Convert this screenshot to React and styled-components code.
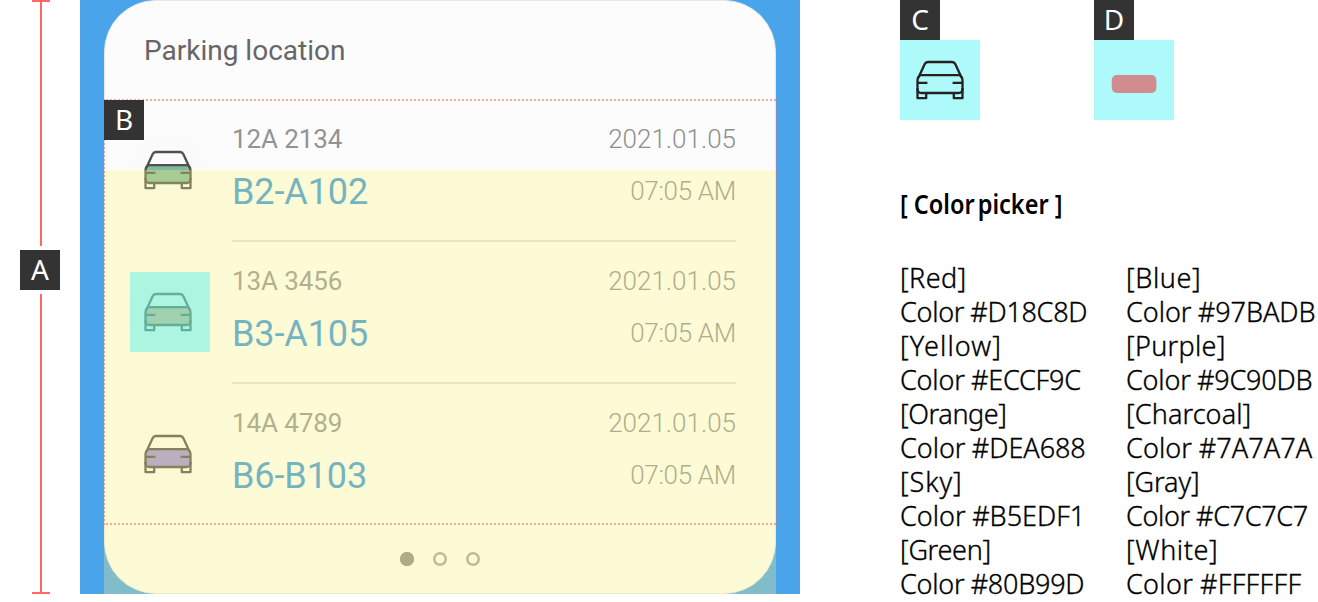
import React from "react";
import styled, { createGlobalStyle } from "styled-components";

const GlobalStyle = createGlobalStyle`
  * { box-sizing: border-box; }
  body { margin: 0; background: #fff; overflow: hidden; }
`;

const Page = styled.main`
  display: flex;
  width: 1318px;
  height: 602px;
  overflow: hidden;
  background: #fff;
`;

const Measure = styled.div`
  width: 80px;
  height: 594px;
  display: flex;
  flex-direction: column;
  align-items: center;
  gap: 4px;
  flex: none;
`;

const MeasureLine = styled.div`
  width: 18px;
  margin-left: 2px;
  height: ${(p) => p.$height}px;
  background: linear-gradient(#ff6666, #ff6666) center / 2px 100% no-repeat;
  border-${(p) => p.$cap}: 2px solid #ff6666;
`;

const Badge = styled.div`
  width: 40px;
  height: 40px;
  display: flex;
  align-items: center;
  justify-content: center;
  flex: none;
  background: #333;
  color: #fff;
  font: 400 28px/38px "Noto Sans", sans-serif;
  padding-bottom: 2px;
`;

const CornerBadge = styled(Badge)`
  position: absolute;
  left: 0;
  top: 1px;
`;

const Stage = styled.section`
  position: relative;
  width: 720px;
  height: 594px;
  padding: 0 24px;
  background: #4aa4ea;
  flex: none;
`;

const Card = styled.div`
  width: 672px;
  height: 594px;
  border: 1px solid #e6e8ea;
  border-radius: 52px;
  background: #fcfcfc;
  font-family: Roboto, sans-serif;
`;

const Title = styled.h1`
  margin: 0;
  height: 99px;
  padding: 1px 39px 0;
  font-size: 28px;
  font-weight: 400;
  line-height: 98px;
  color: #666;
`;

const List = styled.div`
  height: 425px;
  padding: 0 39px 0 23px;
`;

const Row = styled.div`
  display: flex;
  gap: 24px;
  height: 142px;
`;

const IconDisc = styled.div`
  width: 80px;
  height: 80px;
  margin-top: 30px;
  border-radius: 50%;
  background: #fbfbfb;
  flex: none;
`;

const RowBody = styled.div`
  flex: 1;
  display: flex;
  justify-content: space-between;
  border-bottom: 2px solid ${(p) => (p.$last ? "transparent" : "#dedede")};
`;

const Column = styled.div`
  display: flex;
  flex-direction: column;
  text-align: ${(p) => p.$align};
`;

const Plate = styled.span`
  padding-top: 23px;
  font-size: 26px;
  line-height: 32px;
  letter-spacing: -0.1px;
  color: #939393;
`;

const Spot = styled.span`
  padding-top: 16px;
  font-size: 36px;
  line-height: 42px;
  letter-spacing: -0.1px;
  color: #3899dd;
`;

const DateText = styled.span`
  padding-top: 23px;
  font-size: 26px;
  font-weight: 300;
  line-height: 32px;
  color: #8f8f8f;
`;

const TimeText = styled(DateText)`
  padding-top: 20px;
  letter-spacing: -0.3px;
`;

const Pager = styled.div`
  display: flex;
  justify-content: center;
  gap: 19px;
  padding: 27px 0 0;
`;

const Dot = styled.i`
  width: 14px;
  height: 14px;
  border-radius: 50%;
  box-shadow: inset 0 0 0 2.5px ${(p) => (p.$on ? "#8c8c8c" : "#a2a2a2")};
  background: ${(p) => (p.$on ? "#8c8c8c" : "transparent")};
`;

const YellowZone = styled.div`
  position: absolute;
  left: 24px;
  top: 170px;
  width: 672px;
  height: 424px;
  background: rgba(255, 245, 126, 0.3);
`;

const Outline = styled.div`
  position: absolute;
  left: 24px;
  top: 99px;
  width: 673px;
  height: 426px;
  --dot: rgba(255, 96, 96, 0.55);
  background:
    repeating-linear-gradient(90deg, transparent 0 2px, var(--dot) 2px 4px) 0 0 / 100% 2px no-repeat,
    repeating-linear-gradient(90deg, transparent 0 2px, var(--dot) 2px 4px) 0 100% / 100% 2px no-repeat,
    repeating-linear-gradient(var(--dot) 0 2px, transparent 2px 4px) 0 0 / 1px 100% no-repeat,
    repeating-linear-gradient(var(--dot) 0 2px, transparent 2px 4px) 100% 0 / 1px 100% no-repeat;
`;

const Highlight = styled.div`
  width: 80px;
  height: 80px;
  background: rgba(53, 239, 240, 0.4);
`;

const RowHighlight = styled(Highlight)`
  position: absolute;
  left: 50px;
  top: 272px;
`;

const Legend = styled.section`
  padding-left: 100px;
  color: #000;
  font-family: "Noto Sans", sans-serif;
  flex: none;
`;

const Samples = styled.div`
  display: flex;
  gap: 114px;
  height: 120px;
`;

const Sample = styled.div`
  width: 80px;
`;

const Heading = styled.h2`
  display: flex;
  gap: 7px;
  margin: 67px 0 0;
  font-size: 27px;
  font-weight: 600;
  line-height: 34px;
  white-space: nowrap;
  word-spacing: -3.5px;
  transform: scaleX(0.87);
  transform-origin: 0 50%;
`;

const Palette = styled.div`
  display: grid;
  grid-template-columns: 226px 200px;
  margin-top: 40px;
`;

const Line = styled.div`
  height: 34px;
  font-size: 27px;
  font-weight: 300;
  -webkit-text-stroke: 0.35px #000;
  line-height: 34px;
  white-space: nowrap;
  letter-spacing: ${(p) => p.$spacing}px;
  word-spacing: ${(p) => (p.$code ? -0.5 : 0)}px;
`;

function CarIcon({ stroke, fill }) {
  return (
    <svg width="80" height="80" viewBox="0 0 80 80" fill="none" display="block">
      {fill && <rect x="17.8" y="35" width="44.6" height="18" rx="5" fill={fill} />}
      {stroke && (
        <g stroke={stroke} strokeWidth="2.3" strokeLinejoin="round">
          <path d="M18.4 37.8 24.6 24.2Q25.6 22 27.8 22H52.2Q54.4 22 55.4 24.2L61.6 37.8" />
          <path d="M20.2 35.2H59.8Q62.5 37.2 62.5 40V49Q62.5 53 58.5 53H21.5Q17.5 53 17.5 49V40Q17.5 37.2 20.2 35.2Z" />
          <path d="M17.5 48V58.2H26.2V53M62.5 48V58.2H53.8V53" />
          <path d="M18 42.8H27.4M62 42.8H52.6" />
        </g>
      )}
    </svg>
  );
}

const cars = [
  ["12A 2134", "B2-A102", "#80B99D"],
  ["13A 3456", "B3-A105", "#DEA688"],
  ["14A 4789", "B6-B103", "#9C90DB"],
];

/* name, code, letter spacing of the name line, letter spacing of the code line */
const swatches = [
  [
    ["Red", "D18C8D", 0.4, -0.3],
    ["Yellow", "ECCF9C", 1.1, -0.2],
    ["Orange", "DEA688", -0.4, -0.05],
    ["Sky", "B5EDF1", 0.9, 0],
    ["Green", "80B99D", -0.3, -0.25],
  ],
  [
    ["Blue", "97BADB", 0.6, -0.05],
    ["Purple", "9C90DB", 0.3, -0.2],
    ["Charcoal", "7A7A7A", 0.1, 0.1],
    ["Gray", "C7C7C7", -0.1, -0.35],
    ["White", "FFFFFF", 0.6, 0.3],
  ],
];

export default function App() {
  return (
    <Page>
      <GlobalStyle />
      <Measure>
        <MeasureLine $height={246} $cap="top" />
        <Badge>A</Badge>
        <MeasureLine $height={300} $cap="bottom" />
      </Measure>
      <Stage>
        <Card>
          <Title>Parking location</Title>
          <List>
            {cars.map(([plate, spot, color], i) => (
              <Row key={plate}>
                <IconDisc><CarIcon stroke="#505050" fill={color} /></IconDisc>
                <RowBody $last={i === 2}>
                  <Column>
                    <Plate>{plate}</Plate>
                    <Spot>{spot}</Spot>
                  </Column>
                  <Column $align="right">
                    <DateText>2021.01.05</DateText>
                    <TimeText>07:05 AM</TimeText>
                  </Column>
                </RowBody>
              </Row>
            ))}
          </List>
          <Pager><Dot $on /><Dot /><Dot /></Pager>
        </Card>
        <YellowZone />
        <RowHighlight />
        <Outline><CornerBadge>B</CornerBadge></Outline>
      </Stage>
      <Legend>
        <Samples>
          <Sample><Badge>C</Badge><Highlight><CarIcon stroke="#222" /></Highlight></Sample>
          <Sample><Badge>D</Badge><Highlight><CarIcon fill="#D18C8D" /></Highlight></Sample>
        </Samples>
        <Heading><span>[</span><span>Color picker</span><span>]</span></Heading>
        <Palette>
          {swatches.map((column, i) => (
            <div key={i}>
              {column.map(([name, code, nameSpacing, codeSpacing]) => (
                <React.Fragment key={name}>
                  <Line $spacing={nameSpacing}>[{name}]</Line>
                  <Line $code $spacing={codeSpacing}>Color #{code}</Line>
                </React.Fragment>
              ))}
            </div>
          ))}
        </Palette>
      </Legend>
    </Page>
  );
}
